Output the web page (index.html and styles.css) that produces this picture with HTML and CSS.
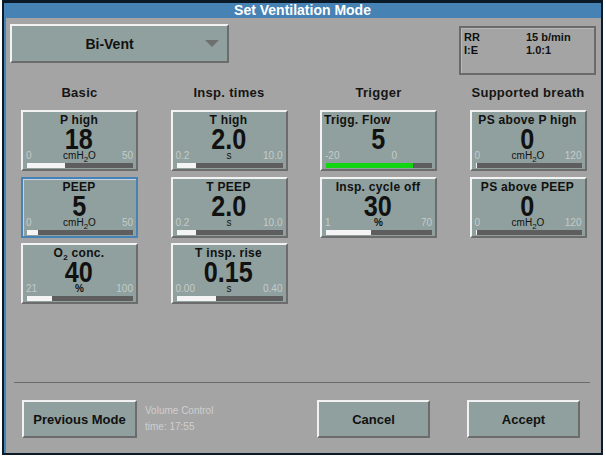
FILE: index.html
```html
<!DOCTYPE html>
<html lang="en">
<head>
    <meta charset="UTF-8">
    <title>Set Ventilation Mode</title>
    <link rel="stylesheet" href="styles.css">
</head>
<body>
    <div class="window">
        <div class="titlebar">Set Ventilation Mode</div>
        <div class="panel">
            <div class="top">
                <div class="mode">
                    <span class="mode-label">Bi-Vent</span>
                    <span class="arrow"></span>
                </div>
                <div class="info">
                    <span>RR</span><span>15 b/min</span>
                    <span>I:E</span><span>1.0:1</span>
                </div>
            </div>

            <div class="headers">
                <div>Basic</div>
                <div>Insp. times</div>
                <div>Trigger</div>
                <div>Supported breath</div>
            </div>

            <div class="cards">
                <!-- row 1 -->
                <div class="card">
                    <div class="name">P high</div>
                    <div class="value"><span>18</span></div>
                    <div class="scale"><span class="min">0</span><span class="unit">cmH<sub>2</sub>O</span><span class="max">50</span></div>
                    <div class="bar"><div class="fill" style="width:36%"></div></div>
                </div>
                <div class="card">
                    <div class="name">T high</div>
                    <div class="value"><span>2.0</span></div>
                    <div class="scale"><span class="min">0.2</span><span class="unit">s</span><span class="max">10.0</span></div>
                    <div class="bar"><div class="fill" style="width:18%"></div></div>
                </div>
                <div class="card trigger">
                    <div class="name">Trigg. Flow</div>
                    <div class="value"><span>5</span></div>
                    <div class="scale"><span class="min">-20</span><span class="unit"></span><span class="max">0</span></div>
                    <div class="bar"><div class="fill green" style="width:82%"></div></div>
                </div>
                <div class="card">
                    <div class="name">PS above P high</div>
                    <div class="value"><span>0</span></div>
                    <div class="scale"><span class="min">0</span><span class="unit">cmH<sub>2</sub>O</span><span class="max">120</span></div>
                    <div class="bar"><div class="fill" style="width:1px"></div></div>
                </div>

                <!-- row 2 -->
                <div class="card selected">
                    <div class="name">PEEP</div>
                    <div class="value"><span>5</span></div>
                    <div class="scale"><span class="min">0</span><span class="unit">cmH<sub>2</sub>O</span><span class="max">50</span></div>
                    <div class="bar"><div class="fill" style="width:10%"></div></div>
                </div>
                <div class="card">
                    <div class="name">T PEEP</div>
                    <div class="value"><span>2.0</span></div>
                    <div class="scale"><span class="min">0.2</span><span class="unit">s</span><span class="max">10.0</span></div>
                    <div class="bar"><div class="fill" style="width:18%"></div></div>
                </div>
                <div class="card">
                    <div class="name">Insp. cycle off</div>
                    <div class="value"><span>30</span></div>
                    <div class="scale"><span class="min">1</span><span class="unit bold">%</span><span class="max">70</span></div>
                    <div class="bar"><div class="fill" style="width:42%"></div></div>
                </div>
                <div class="card">
                    <div class="name">PS above PEEP</div>
                    <div class="value"><span>0</span></div>
                    <div class="scale"><span class="min">0</span><span class="unit">cmH<sub>2</sub>O</span><span class="max">120</span></div>
                    <div class="bar"><div class="fill" style="width:1px"></div></div>
                </div>

                <!-- row 3 -->
                <div class="card">
                    <div class="name">O<sub>2</sub> conc.</div>
                    <div class="value"><span>40</span></div>
                    <div class="scale"><span class="min">21</span><span class="unit bold">%</span><span class="max">100</span></div>
                    <div class="bar"><div class="fill" style="width:24%"></div></div>
                </div>
                <div class="card">
                    <div class="name">T insp. rise</div>
                    <div class="value"><span>0.15</span></div>
                    <div class="scale"><span class="min">0.00</span><span class="unit">s</span><span class="max">0.40</span></div>
                    <div class="bar"><div class="fill" style="width:37.5%"></div></div>
                </div>
            </div>

            <div class="footer">
                <div class="divider"></div>
                <div class="actions">
                    <button class="btn prev">Previous Mode</button>
                    <div class="last-mode">
                        <div>Volume Control</div>
                        <div>time: 17:55</div>
                    </div>
                    <button class="btn cancel">Cancel</button>
                    <button class="btn accept">Accept</button>
                </div>
            </div>
        </div>
    </div>
</body>
</html>
```

FILE: styles.css
```css
body {
    margin: 0;
    background: #ffffff;
    font-family: "Liberation Sans", Arial, sans-serif;
    color: #111;
}

.window {
    width: 601px;
    height: 455px;
    margin-left: 2px;
    box-sizing: border-box;
    border: 2px solid #0c1926;
    border-top-width: 3px;
    background: #a4a4a4;
    display: flex;
    flex-direction: column;
}

.titlebar {
    height: 15px;
    line-height: 14px;
    background: #4682b4;
    color: #fff;
    font-size: 14px;
    font-weight: bold;
    text-align: center;
}

.panel {
    flex: 1;
    border-left: 2px solid #4682b4;
    display: flex;
    flex-direction: column;
}

/* mode selector + info box */
.top {
    display: flex;
    justify-content: space-between;
    align-items: flex-start;
    padding: 6px 5px 0 4px;
    height: 51px;
}

.mode {
    width: 219px;
    height: 39px;
    box-sizing: border-box;
    background: #8fa09e;
    border: 2px solid;
    border-color: #f2f2f2 #6c6c6c #6c6c6c #f2f2f2;
    display: flex;
    align-items: center;
}

.mode-label {
    flex: 1;
    text-align: center;
    font-size: 14px;
    font-weight: bold;
    padding-left: 2px;
}

.arrow {
    width: 0;
    height: 0;
    border-left: 7px solid transparent;
    border-right: 7px solid transparent;
    border-top: 7px solid #6f6f6f;
    margin-right: 8px;
}

.info {
    margin-top: 2px;
    width: 137px;
    height: 49px;
    box-sizing: border-box;
    border: 2px solid #6a6a6a;
    box-shadow: inset 1px 1px 0 #b8b8b8;
    display: grid;
    grid-template-columns: 62px auto;
    grid-auto-rows: 13px;
    padding: 3px 3px;
    font-size: 11px;
    font-weight: bold;
    line-height: 13px;
}

/* columns */
.headers,
.cards {
    display: grid;
    grid-template-columns: repeat(4, 117px);
    column-gap: 32.5px;
    padding-left: 15px;
}

.headers {
    margin-top: 10px;
    font-size: 13px;
    font-weight: bold;
    letter-spacing: 0.3px;
    line-height: 16px;
    text-align: center;
    color: #151515;
}

.cards {
    margin-top: 9px;
    grid-auto-rows: 61px;
    row-gap: 5.5px;
}

.card {
    box-sizing: border-box;
    background: #8fa09e;
    border: 2px solid;
    border-color: #f2f2f2 #6c6c6c #6c6c6c #f2f2f2;
    padding: 2px 3px 0 2px;
    display: flex;
    flex-direction: column;
}

.card.selected {
    border-color: #4682b4;
    box-shadow: inset 1px 1px 0 #c4d4e4;
}

.name {
    font-size: 12px;
    font-weight: bold;
    letter-spacing: 0.3px;
    line-height: 13px;
    text-align: center;
    white-space: nowrap;
}

.name sub,
.unit sub {
    font-size: 8px;
    line-height: 0;
}

.trigger .name {
    text-align: left;
}

.value {
    font-size: 30px;
    font-weight: bold;
    line-height: 24px;
    text-align: center;
}

.value span {
    display: inline-block;
    transform: scaleX(0.84);
}

.scale {
    display: grid;
    grid-template-columns: 1fr auto 1fr;
    font-size: 10px;
    line-height: 10px;
    height: 10px;
    padding: 0 0 0 1px;
}

.min {
    color: #c5cbcb;
}

.max {
    color: #c5cbcb;
    text-align: right;
}

.trigger .max {
    text-align: left;
    padding-left: 13px;
}

.unit {
    color: #111;
}

.unit.bold {
    font-weight: bold;
}

.bar {
    margin: 2px 0 0 2px;
    height: 5px;
    background: #5e5e5e;
}

.fill {
    height: 100%;
    background: #f4f4f4;
}

.fill.green {
    background: #12d612;
}

/* bottom area */
.footer {
    margin-top: auto;
}

.divider {
    height: 1px;
    background: #6a6a6a;
    margin: 0 11px 0 8px;
}

.actions {
    display: flex;
    align-items: center;
    padding: 17px 21px 15px 16px;
}

.btn {
    height: 38px;
    box-sizing: border-box;
    background: #8fa09e;
    border: 2px solid;
    border-color: #f2f2f2 #6c6c6c #6c6c6c #f2f2f2;
    font-family: "Liberation Sans", Arial, sans-serif;
    font-size: 13px;
    font-weight: bold;
    color: #111;
    padding: 0;
}

.prev {
    width: 115px;
}

.cancel {
    width: 113px;
    margin-left: auto;
}

.accept {
    width: 113px;
    margin-left: 37px;
}

.last-mode {
    margin-left: 8px;
    font-size: 10px;
    line-height: 16px;
    color: #cfcfcf;
}
```
